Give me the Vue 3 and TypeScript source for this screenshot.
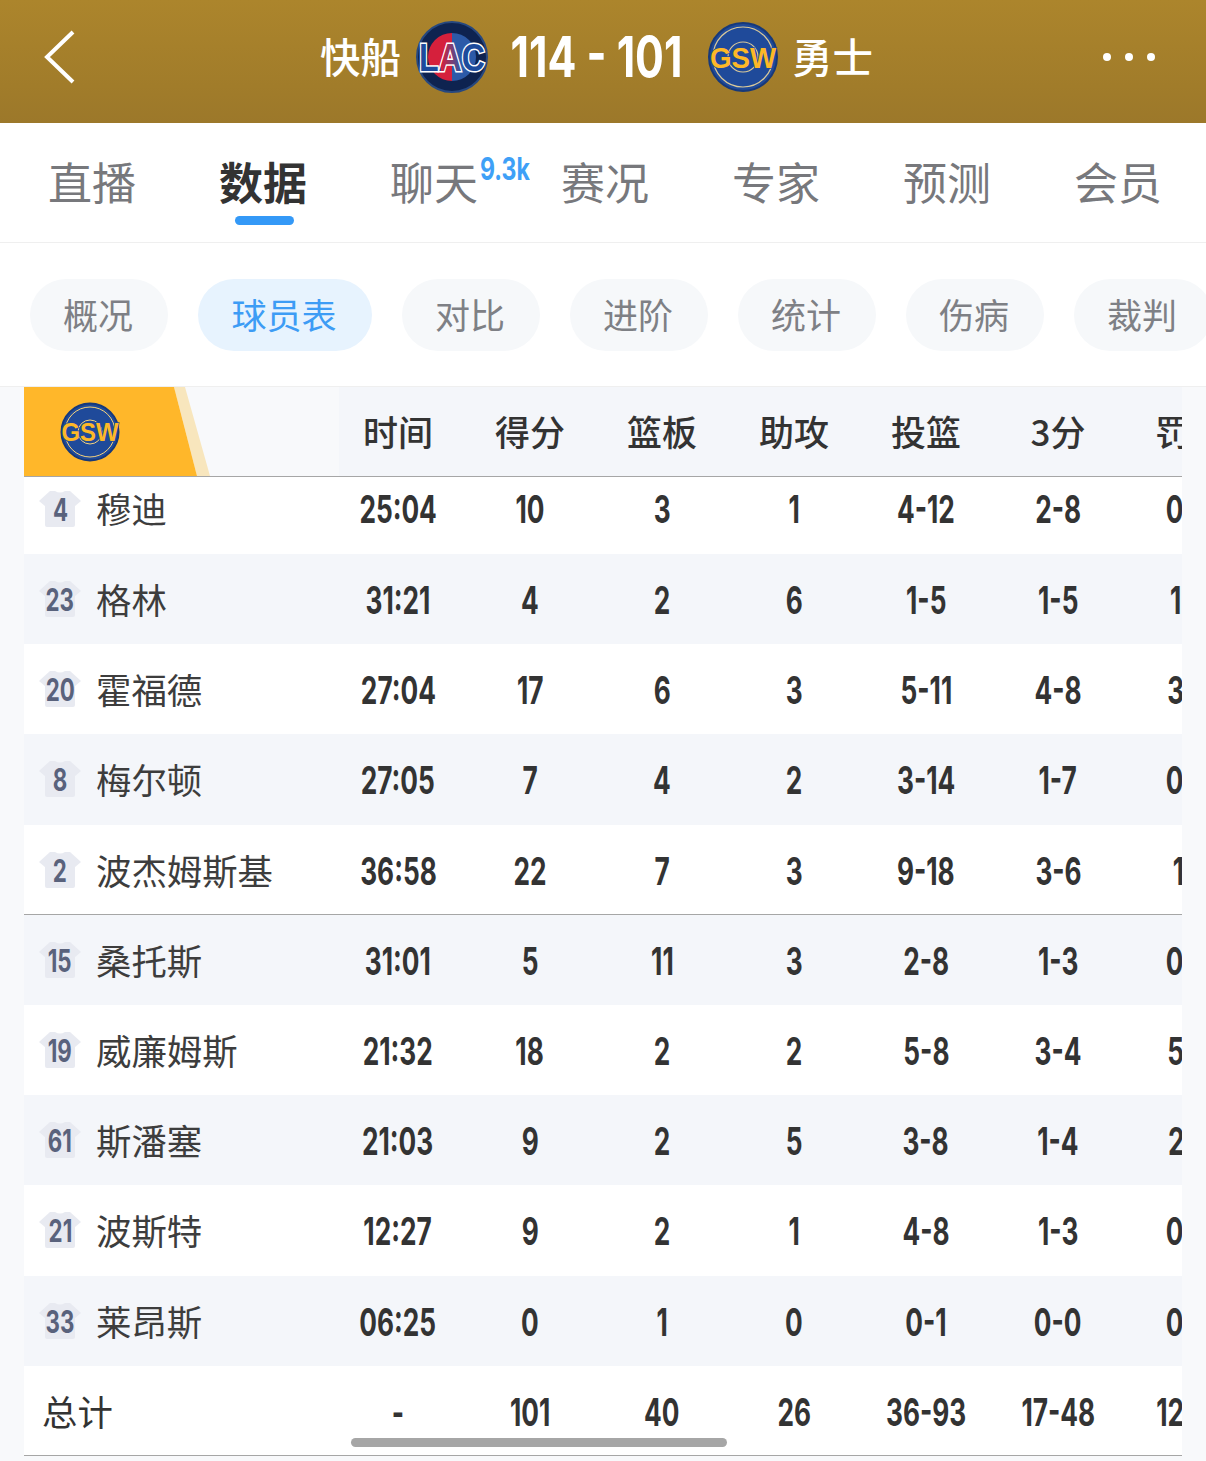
<script setup lang="ts">
interface Row {
  no: string
  name: string
  stats: string[]
  divider?: boolean
}

const tabs = ['直播', '数据', '聊天', '赛况', '专家', '预测', '会员']
const pills = ['概况', '球员表', '对比', '进阶', '统计', '伤病', '裁判']
const columns = ['时间', '得分', '篮板', '助攻', '投篮', '3分', '罚球']

const rows: Row[] = [
  { no: '4', name: '穆迪', stats: ['25:04', '10', '3', '1', '4-12', '2-8', '0-0'] },
  { no: '23', name: '格林', stats: ['31:21', '4', '2', '6', '1-5', '1-5', '1-2'] },
  { no: '20', name: '霍福德', stats: ['27:04', '17', '6', '3', '5-11', '4-8', '3-3'] },
  { no: '8', name: '梅尔顿', stats: ['27:05', '7', '4', '2', '3-14', '1-7', '0-0'] },
  { no: '2', name: '波杰姆斯基', stats: ['36:58', '22', '7', '3', '9-18', '3-6', '1-1'], divider: true },
  { no: '15', name: '桑托斯', stats: ['31:01', '5', '11', '3', '2-8', '1-3', '0-0'] },
  { no: '19', name: '威廉姆斯', stats: ['21:32', '18', '2', '2', '5-8', '3-4', '5-6'] },
  { no: '61', name: '斯潘塞', stats: ['21:03', '9', '2', '5', '3-8', '1-4', '2-2'] },
  { no: '21', name: '波斯特', stats: ['12:27', '9', '2', '1', '4-8', '1-3', '0-0'] },
  { no: '33', name: '莱昂斯', stats: ['06:25', '0', '1', '0', '0-1', '0-0', '0-0'] }
]

const totals = ['-', '101', '40', '26', '36-93', '17-48', '12-15']
</script>

<template>
  <div class="page">
    <header class="hero">
      <svg class="back" width="34" height="56" viewBox="0 0 34 56">
        <path d="M30 3 L4 28 L30 53" fill="none" stroke="#fff" stroke-width="4" />
      </svg>
      <div class="match">
        <span class="team-name">快船</span>
        <svg class="logo lac" width="72" height="72" viewBox="0 0 72 72">
          <defs>
            <linearGradient id="lacFill" x1="0" x2="1" y1="0" y2="0">
              <stop offset="0.34" stop-color="#1d4b9c" />
              <stop offset="0.34" stop-color="#d5203c" />
              <stop offset="0.64" stop-color="#2c5aa8" />
              <stop offset="0.64" stop-color="#1d4b9c" />
            </linearGradient>
          </defs>
          <circle cx="36" cy="36" r="35" fill="#0e2350" stroke="#27487f" stroke-width="2" />
          <path d="M36 12 A24 24 0 0 0 36 60 Z" fill="#d5203c" />
          <path d="M36 12 A24 24 0 0 1 36 60 Z" fill="#2c5aa8" />
          <text x="36" y="50" text-anchor="middle" class="logo-lac" textLength="66" lengthAdjust="spacingAndGlyphs">LAC</text>
        </svg>
        <span class="score"><span>114 - 101</span></span>
        <svg class="logo gsw" width="70" height="72" viewBox="0 0 70 72">
          <circle cx="35" cy="36" r="34" fill="#1f4a9a" stroke="#17397a" stroke-width="2" />
          <circle cx="35" cy="36" r="30" fill="none" stroke="#d9c99a" stroke-width="1.2" />
          <circle cx="35" cy="36" r="15" fill="none" stroke="#d9c99a" stroke-width="1.2" />
          <text x="35" y="47" text-anchor="middle" class="logo-gsw" textLength="66" lengthAdjust="spacingAndGlyphs">GSW</text>
        </svg>
        <span class="team-name">勇士</span>
      </div>
      <div class="more"><i></i><i></i><i></i></div>
    </header>

    <nav class="tabs">
      <div v-for="(t, i) in tabs" :key="t" class="tab" :class="{ active: i === 1 }">
        {{ t }}
        <span v-if="i === 2" class="heat">9.3k</span>
      </div>
    </nav>

    <div class="pills">
      <div v-for="(p, i) in pills" :key="p" class="pill" :class="{ active: i === 1 }">{{ p }}</div>
    </div>

    <section class="board">
      <div class="line head">
        <div class="first team-cell">
          <div class="flag">
            <svg width="60" height="60" viewBox="0 0 60 60">
              <circle cx="30" cy="30" r="28.5" fill="#1f4a9a" stroke="#17397a" stroke-width="2" />
              <circle cx="30" cy="30" r="25" fill="none" stroke="#f4d27c" stroke-width="1" />
              <circle cx="30" cy="30" r="12" fill="none" stroke="#f4d27c" stroke-width="1" />
              <text x="30" y="39" text-anchor="middle" class="logo-gsw small" textLength="57" lengthAdjust="spacingAndGlyphs">GSW</text>
            </svg>
          </div>
        </div>
        <div v-for="c in columns" :key="c" class="cell head-cell">{{ c }}</div>
      </div>

      <div
        v-for="(r, i) in rows"
        :key="r.no"
        class="line"
        :class="{ odd: i % 2 === 1, top: i === 0, divider: r.divider }"
      >
        <div class="first">
          <span class="jersey">
            <svg width="42" height="36" viewBox="0 0 42 36">
              <path d="M11 0 H16 Q21 3 26 0 H31 L42 10 L36 15 V34 Q36 36 34 36 H8 Q6 36 6 34 V15 L0 10 Z" fill="#e8eaf1" />
            </svg>
            <b><span>{{ r.no }}</span></b>
          </span>
          <span class="name">{{ r.name }}</span>
        </div>
        <div v-for="(s, j) in r.stats" :key="j" class="cell"><span class="num">{{ s }}</span></div>
      </div>

      <div class="line total">
        <div class="first"><span class="name sum">总计</span></div>
        <div v-for="(s, j) in totals" :key="j" class="cell"><span class="num">{{ s }}</span></div>
        <div class="thumb"></div>
      </div>
    </section>
  </div>
</template>

<style scoped>
.page {
  width: 1206px;
  height: 1461px;
  overflow: hidden;
  background: #f8f9fb;
  font-family: "Noto Sans CJK SC", "Noto Sans", sans-serif;
  color: #333;
}

.hero {
  height: 123px;
  position: relative;
  display: flex;
  align-items: center;
  justify-content: center;
  background: linear-gradient(180deg, #ac852c 0%, #a17c2a 70%, #9c782a 100%);
}
.back {
  position: absolute;
  left: 43px;
  top: 29px;
}
.match {
  display: flex;
  align-items: center;
  margin-left: -13px;
  margin-top: -10px;
  color: #fff;
}
.logo {
  display: block;
  flex: none;
  overflow: visible;
}
.logo.lac {
  margin: 0 23px 0 15px;
}
.logo.gsw {
  margin: 0 14px 0 26px;
}
.team-name {
  font-size: 40.5px;
  line-height: 50px;
  font-weight: 500;
  margin-top: -1px;
}
.score {
  flex: none;
  width: 171px;
  display: flex;
  justify-content: center;
  font-family: Inter, "Liberation Sans", sans-serif;
  font-weight: 700;
  font-size: 57px;
  line-height: 64px;
  white-space: nowrap;
}
.score span {
  flex: none;
  transform: scaleX(0.75);
}
.logo-lac {
  font-family: "Liberation Sans", sans-serif;
  font-weight: 700;
  font-size: 39px;
  fill: url(#lacFill);
  stroke: #fff;
  stroke-width: 3;
  paint-order: stroke;
}
.logo-gsw {
  font-family: "Liberation Sans", sans-serif;
  font-weight: 700;
  font-size: 29px;
  fill: #fdb827;
  stroke: #1f4a9a;
  stroke-width: 1.5;
  paint-order: stroke;
}
.logo-gsw.small {
  font-size: 26px;
}
.more {
  position: absolute;
  right: 51px;
  top: 53px;
  display: flex;
  gap: 14px;
}
.more i {
  width: 8px;
  height: 8px;
  border-radius: 50%;
  background: #fff;
}

.tabs {
  height: 119px;
  background: #fff;
  border-bottom: 1px solid #efefef;
  display: flex;
  padding-left: 48px;
  gap: 85px;
}
.tab {
  position: relative;
  width: 86px;
  padding-top: 28px;
  font-size: 44px;
  line-height: 60px;
  text-align: center;
  white-space: nowrap;
  color: #77787c;
}
.tab.active {
  color: #333;
  font-weight: 700;
}
.tab.active::after {
  content: "";
  position: absolute;
  left: 16px;
  top: 93px;
  width: 59px;
  height: 9px;
  border-radius: 5px;
  background: #3499f7;
}
.heat {
  position: absolute;
  left: 90px;
  top: 28px;
  font-family: Inter, "Liberation Sans", sans-serif;
  font-size: 31px;
  line-height: 36px;
  font-weight: 700;
  color: #3ea0f7;
  transform: scaleX(0.745);
  transform-origin: left center;
}

.pills {
  height: 144px;
  background: #fff;
  border-bottom: 1px solid #efefef;
  box-sizing: border-box;
  padding: 36px 0 0 30px;
  display: flex;
  gap: 30px;
}
.pill {
  flex: none;
  box-sizing: border-box;
  width: 138px;
  height: 72px;
  border-radius: 36px;
  background: #f6f8fa;
  color: #7e8085;
  font-size: 35px;
  line-height: 70px;
  padding-right: 2px;
  text-align: center;
}
.pill.active {
  width: 174px;
  background: #e7f3fe;
  color: #3d9cf5;
}

.board {
  width: 1158px;
  margin-left: 24px;
  overflow: hidden;
  position: relative;
}
.line {
  display: flex;
  height: 90.2px;
  background: #fff;
}
.line.odd {
  background: #f4f6fa;
}
.line.top {
  height: 77px;
}
.line.divider {
  box-shadow: inset 0 -1px 0 #a6a6a6;
}
.line.head {
  height: 90px;
  background: #f4f6fa;
  box-sizing: border-box;
  border-bottom: 1px solid #a6a6a6;
}
.first {
  flex: none;
  width: 308px;
  display: flex;
  align-items: center;
  position: relative;
}
.team-cell {
  background: #f8f9fb;
  box-shadow: 7px 0 0 #f8f9fb;
}
.flag {
  position: absolute;
  left: 0;
  top: 0;
  width: 186px;
  height: 89px;
  background: #ffb72a;
  clip-path: polygon(0 0, 150px 0, 173px 100%, 0 100%);
}
.flag svg {
  position: absolute;
  left: 36px;
  top: 15px;
  overflow: visible;
}
.team-cell::before {
  content: "";
  position: absolute;
  left: 150px;
  top: 0;
  width: 36px;
  height: 89px;
  background: #f8e6bd;
  clip-path: polygon(0 0, 11px 0, 36px 100%, 23px 100%);
}
.cell {
  flex: none;
  width: 132px;
  display: flex;
  justify-content: center;
  line-height: 92px;
  white-space: nowrap;
  font-size: 38px;
  color: #333;
}
.num {
  flex: none;
  font-family: Inter, "Liberation Sans", sans-serif;
  font-weight: 700;
  transform: scaleX(0.69);
}
.top .cell,
.top .first {
  line-height: 65px;
  align-items: flex-start;
}
.cell.head-cell {
  font-size: 35px;
  font-weight: 500;
  line-height: 87px;
}
.jersey {
  position: relative;
  flex: none;
  width: 42px;
  height: 36px;
  margin-left: 15px;
  display: block;
}
.top .jersey {
  margin-top: 14px;
}
.jersey svg {
  display: block;
}
.jersey b {
  position: absolute;
  inset: 0;
  display: flex;
  justify-content: center;
  font-family: Inter, "Liberation Sans", sans-serif;
  font-size: 31px;
  line-height: 38px;
  color: #59627c;
}
.jersey b span {
  flex: none;
  transform: scaleX(0.72);
}
.name {
  margin-left: 15px;
  font-size: 35.4px;
  line-height: 50px;
  white-space: nowrap;
  color: #3d3d3d;
}
.top .name {
  margin-top: 6px;
}
.name.sum {
  margin-left: 18px;
  color: #333;
}
.total {
  position: relative;
  box-shadow: inset 0 -1px 0 #a6a6a6;
}
.thumb {
  position: absolute;
  left: 327px;
  top: 72px;
  width: 376px;
  height: 9px;
  border-radius: 5px;
  background: #a6a6a6;
}
</style>

<style>
html,
body {
  margin: 0;
  background: #f8f9fb;
}
</style>
